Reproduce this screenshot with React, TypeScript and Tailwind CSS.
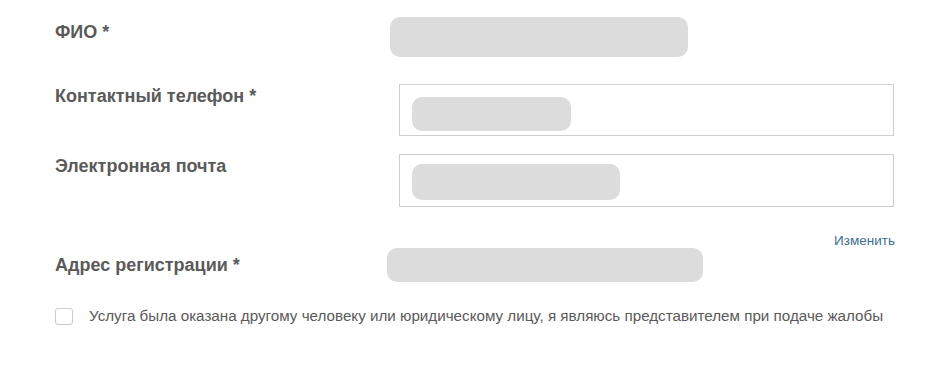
import React from "react";

export default function App() {
  const label =
    "w-[387px] shrink-0 pl-[55px] text-[18px] leading-[20px] font-bold text-[#5a5a5a]";
  return (
    <div className="w-[931px] h-[382px] bg-white pt-[17px] font-['Liberation_Sans',Arial,sans-serif]">
      <div className="flex items-start h-[40px]">
        <div className={label + " mt-[5px]"}>ФИО *</div>
        <div className="ml-[3px] w-[298px] h-[40px] rounded-[10px] bg-[#dcdcdc]" />
      </div>

      <div className="flex items-start mt-[27px]">
        <div className={label + " mt-[2px]"}>Контактный телефон *</div>
        <div className="ml-[12px] w-[495px] h-[52px] border border-[#cfcfcf] pl-[12px] pt-[12px]">
          <div className="w-[159px] h-[34px] rounded-[10px] bg-[#dcdcdc]" />
        </div>
      </div>

      <div className="flex items-start mt-[18px]">
        <div className={label + " mt-[2px]"}>Электронная почта</div>
        <div className="ml-[12px] w-[495px] h-[53px] border border-[#cfcfcf] pl-[12px] pt-[9px]">
          <div className="w-[208px] h-[36px] rounded-[10px] bg-[#dcdcdc]" />
        </div>
      </div>

      <div className="mt-[27px] h-[14px] w-[895px] flex justify-end">
        <span className="text-[13.5px] leading-[14px] text-[#3d6f8e]">Изменить</span>
      </div>

      <div className="flex items-center h-[34px]">
        <div className={label}>Адрес регистрации *</div>
        <div className="w-[316px] h-[34px] rounded-[10px] bg-[#dcdcdc]" />
      </div>

      <div className="flex items-center mt-[25px] pl-[55px]">
        <div className="w-[18px] h-[17px] rounded-[3px] border border-[#cccccc] bg-white shrink-0" />
        <span className="ml-[16px] text-[15.2px] leading-[18px] text-[#5a5a5a]">
          Услуга была оказана другому человеку или юридическому лицу, я являюсь представителем при подаче жалобы
        </span>
      </div>
    </div>
  );
}
